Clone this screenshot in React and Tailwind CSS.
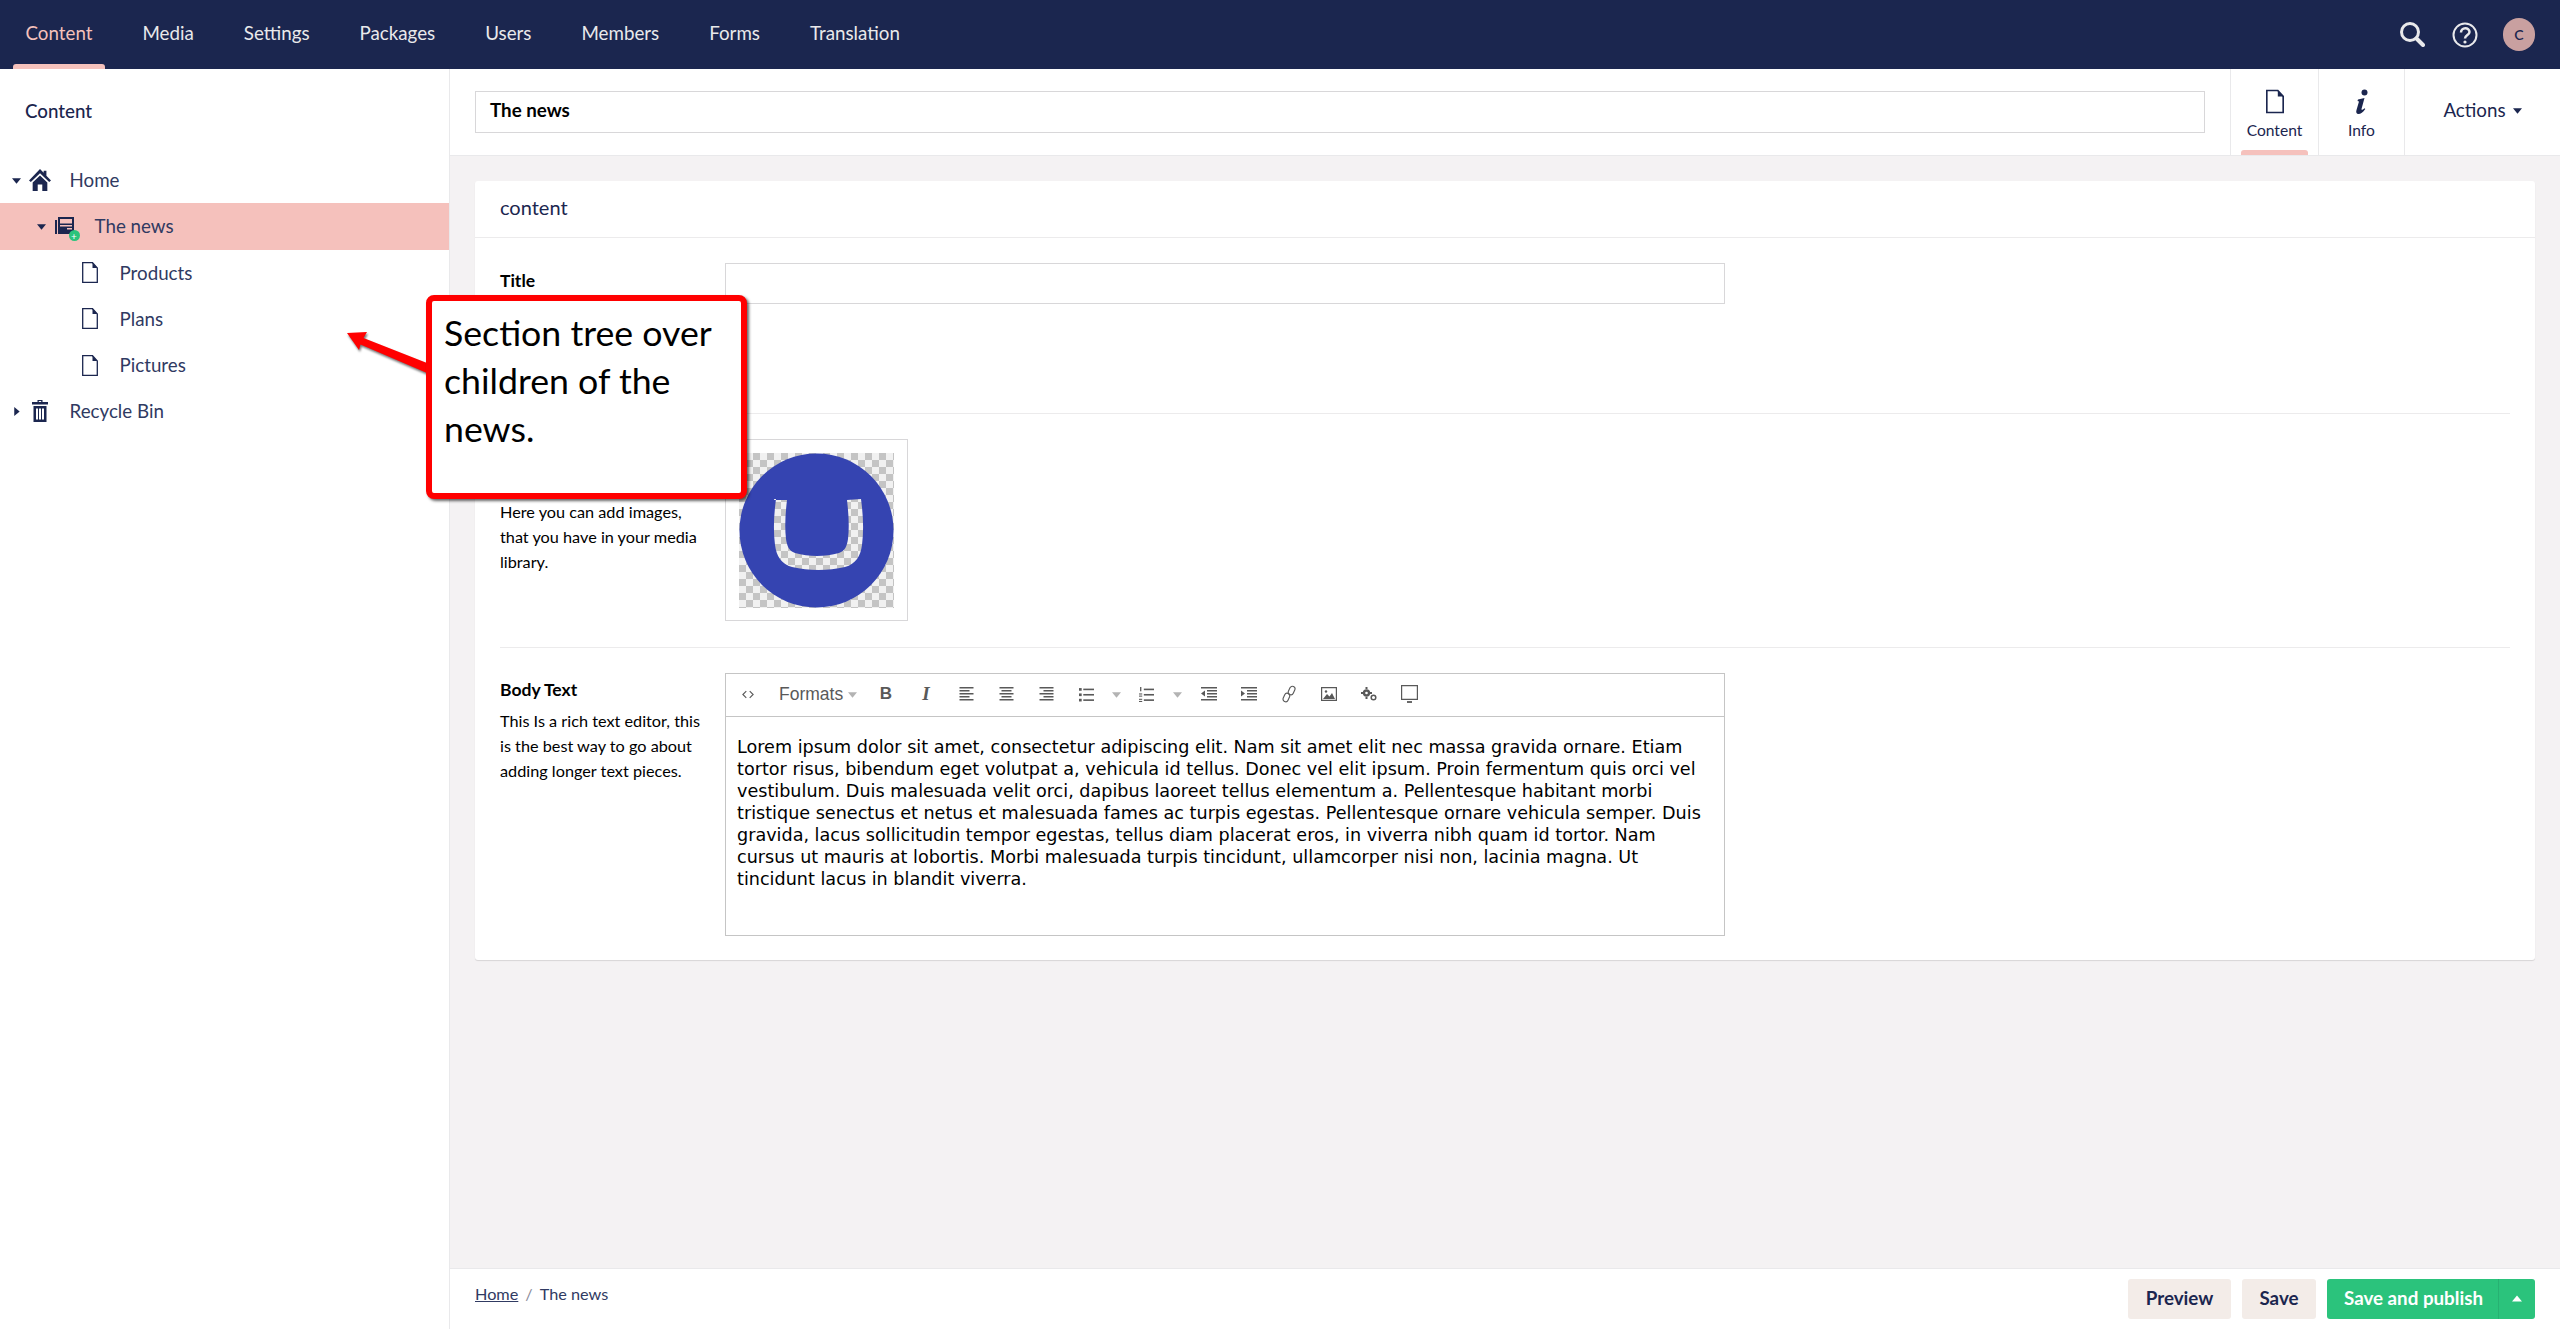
import React from "react";

const Doc = ({ className = "", sw = "1.300" }) => (
  <svg viewBox="0 0 16 21" className={className}>
    <path d="M.7.7h9.800L15.300 6v14.300H.7z" fill="#fff" stroke="#1b264f" strokeWidth={sw} />
    <path d="M10.500.7V6h4.800z" fill="#1b264f" />
  </svg>
);
const Caret = ({ dir = "down", className = "" }) => (
  <svg viewBox="0 0 10 10" className={className} fill="currentColor">
    {dir === "down" && <path d="M0 2.500h10L5 8.500z" />}
    {dir === "up" && <path d="M0 7.500h10L5 1.500z" />}
    {dir === "right" && <path d="M2.500 0v10L8.500 5z" />}
  </svg>
);

const NavItem = ({ children, active }) => (
  <div className={`relative h-full flex items-center px-[12.5px] pb-[3px] mr-[25px] text-[18.75px] ${active ? "text-[#f5c1bc]" : "text-[#e9e9eb]"}`}>
    {children}
    {active && <span className="absolute left-0 right-0 bottom-0 h-[5px] rounded-t-[3px] bg-[#f5c1bc]" />}
  </div>
);

const TreeRow = ({ depth, arrow, icon, label, active }) => (
  <div className={`flex items-center h-[46.25px] text-[18.75px] text-[#303a62] ${active ? "bg-[#f5c1bc]" : ""}`} style={{ paddingLeft: depth * 25 + 12 }}>
    <span className="w-[16px] flex items-center shrink-0 text-[#1b264f]">
      {arrow && <Caret dir={arrow} className="w-[9px] h-[9px]" />}
    </span>
    <span className="w-[24px] flex justify-center shrink-0 mr-[17.5px]">{icon}</span>
    <span>{label}</span>
  </div>
);

const Home = () => (
  <svg viewBox="0 0 24 24" className="w-[22px] h-[22px]" fill="#1b264f">
    <path d="M12 0 0 12.500l2 1.800L12 4.500l10 9.800 2-1.800L19 7.300V2h-3v2.200z" />
    <path d="M12 7 4 14.600V24h5.500v-7h5v7H20v-9.400z" />
  </svg>
);
const News = () => (
  <span className="relative block w-[19px] h-[18px] -ml-[2px]">
    <svg viewBox="0 0 19 18" className="w-[19px] h-[18px]">
      <path d="M0 3h2v14H0zM3 0h16v17H3z" fill="#1b264f" />
      <path d="M5 2h12v4.500H5zM5 8h12v1.500H5zM12 11h5v1.500h-5z" fill="#f5c1bc" />
    </svg>
    <span className="absolute right-[-6px] bottom-[-6px] w-[11px] h-[11px] rounded-full bg-[#2bc37c] flex items-center justify-center text-white text-[10px] leading-none">+</span>
  </span>
);
const Trash = () => (
  <svg viewBox="0 0 16 22" className="w-[16px] h-[22px]" fill="#1b264f">
    <path d="M5.500 0h5v2H16v2.500H0V2h5.500zM6.800 1v1h2.400V1z" fillRule="evenodd" />
    <path d="M1.500 6h13v16h-13zM4 8.500v11h2V8.500zm3 0v11h2V8.500zm3 0v11h2V8.500z" fillRule="evenodd" />
  </svg>
);

const Tool = ({ children, w = "w-[40px]" }) => (
  <span className={`${w} h-full pb-[2px] flex items-center justify-center shrink-0 text-[#595959]`}>{children}</span>
);
const Lines = ({ kind }) => {
  const rows = {
    left: [[0, 14], [0, 10], [0, 14], [0, 10], [0, 14]],
    center: [[0, 14], [2, 10], [0, 14], [2, 10], [0, 14]],
    right: [[0, 14], [4, 10], [0, 14], [4, 10], [0, 14]],
  }[kind];
  return (
    <svg viewBox="0 0 14 14" className="w-[15px] h-[14px]" fill="currentColor">
      {rows.map(([x, w], i) => <rect key={i} x={x} y={i * 3} width={w} height="1.500" />)}
    </svg>
  );
};
const ToolCaret = ({ w = "w-[21px]" }) => (
  <Tool w={w}><Caret className="w-[9px] h-[9px] text-[#b3b3b3]" /></Tool>
);

const Toolbar = () => (
  <div className="h-[43px] flex items-center border-b border-[#c5c5c5] shrink-0 pl-[2px]">
    <Tool>
      <svg viewBox="0 0 14 10" className="w-[12px] h-[9px]" fill="none" stroke="currentColor" strokeWidth="1.300"><path d="M5 1 1 5l4 4M9 1l4 4-4 4" /></svg>
    </Tool>
    <span className="flex items-center w-[98px] pl-[11px] pb-[2px] text-[17.5px] text-[#595959] font-['Liberation_Sans',sans-serif] shrink-0">
      Formats<Caret className="w-[9px] h-[9px] ml-[5px] text-[#b3b3b3]" />
    </span>
    <Tool><span className="font-['Liberation_Sans',sans-serif] font-bold text-[17px]">B</span></Tool>
    <Tool><span className="font-['Liberation_Serif',serif] italic font-bold text-[19px]">I</span></Tool>
    <Tool><Lines kind="left" /></Tool>
    <Tool><Lines kind="center" /></Tool>
    <Tool><Lines kind="right" /></Tool>
    <Tool>
      <svg viewBox="0 0 14 14" className="w-[15px] h-[15px]" fill="currentColor">
        <rect x="0" y="1" width="2.500" height="2.500" /><rect x="0" y="6" width="2.500" height="2.500" /><rect x="0" y="11" width="2.500" height="2.500" />
        <rect x="4" y="1.500" width="10" height="1.500" /><rect x="4" y="6.500" width="10" height="1.500" /><rect x="4" y="11.500" width="10" height="1.500" />
      </svg>
    </Tool>
    <ToolCaret w="w-[20px]" />
    <Tool>
      <svg viewBox="0 0 14 14" className="w-[15px] h-[15px]" fill="currentColor">
        <rect x="1" y="0" width="1.200" height="4" /><rect x="0" y="6" width="3" height="1" /><rect x="0" y="8" width="3" height="1" /><rect x="0" y="11" width="3" height="1" /><rect x="0" y="13" width="3" height="1" />
        <rect x="4.500" y="1.500" width="9.500" height="1.500" /><rect x="4.500" y="6.500" width="9.500" height="1.500" /><rect x="4.500" y="11.500" width="9.500" height="1.500" />
      </svg>
    </Tool>
    <ToolCaret w="w-[23px]" />
    <Tool>
      <svg viewBox="0 0 16 14" className="w-[16px] h-[14px]" fill="currentColor">
        <rect width="16" height="1.500" /><rect x="6" y="3" width="10" height="1.500" /><rect x="6" y="6" width="10" height="1.500" /><rect x="6" y="9" width="10" height="1.500" /><rect y="12" width="16" height="1.500" />
        <path d="M4 3.500v6L0 6.500z" />
      </svg>
    </Tool>
    <Tool>
      <svg viewBox="0 0 16 14" className="w-[16px] h-[14px]" fill="currentColor">
        <rect width="16" height="1.500" /><rect x="6" y="3" width="10" height="1.500" /><rect x="6" y="6" width="10" height="1.500" /><rect x="6" y="9" width="10" height="1.500" /><rect y="12" width="16" height="1.500" />
        <path d="M0 3.500v6l4-3z" />
      </svg>
    </Tool>
    <Tool>
      <svg viewBox="0 0 16 20" className="w-[14px] h-[18px]" fill="none" stroke="currentColor" strokeWidth="1.300">
        <rect x="8" y="1" width="6" height="10" rx="3" transform="rotate(25 11 6)" />
        <rect x="2" y="9" width="6" height="10" rx="3" transform="rotate(25 5 14)" />
      </svg>
    </Tool>
    <Tool>
      <svg viewBox="0 0 16 14" className="w-[16px] h-[14px]">
        <path d="M.6.600h14.800v12.800H.6z" fill="none" stroke="currentColor" strokeWidth="1.200" />
        <path d="M2 12l4-5 2.500 2.500L11 6l3 6z" fill="currentColor" />
        <circle cx="5" cy="4.500" r="1.200" fill="currentColor" />
      </svg>
    </Tool>
    <Tool>
      <svg viewBox="0 0 16 14" className="w-[16px] h-[14px]" fill="currentColor">
        <circle cx="5.500" cy="6" r="3.700" /><circle cx="5.500" cy="6" r="1.300" fill="#fff" />
        <path d="M4.500 0h2v2h-2zM4.500 10h2v2h-2zM0 5h2v2H0zM9 5h2v2H9z" />
        <circle cx="12.500" cy="10.500" r="2.300" fill="none" stroke="currentColor" strokeWidth="1.500" />
      </svg>
    </Tool>
    <Tool>
      <svg viewBox="0 0 17 18" className="w-[17px] h-[18px]" fill="none" stroke="currentColor" strokeWidth="1.200">
        <path d="M.6.600h15.800v13.800H.6z" /><path d="M6 17h5" strokeWidth="1.800" />
      </svg>
    </Tool>
  </div>
);

const Picture = () => (
  <svg viewBox="0 0 155 155" className="w-[155px] h-[155px] block">
    <defs>
      <pattern id="chk" width="14" height="14" patternUnits="userSpaceOnUse">
        <rect width="14" height="14" fill="#f1f1f1" />
        <rect width="7" height="7" fill="#c4c4c4" />
        <rect x="7" y="7" width="7" height="7" fill="#c4c4c4" />
      </pattern>
    </defs>
    <rect width="155" height="155" fill="url(#chk)" />
    <circle cx="77.500" cy="77.500" r="77" fill="#3544b1" />
    <path fill="url(#chk)" d="M34 46l14 1c-1.500 13-2.500 26-1 39 1 7 3 12 9 14 14 4 30 4 44 0 6-2 8-7 9-14 1.500-13 .5-26-1-39l14-1c2 15 3 30 1 46-1.500 11-6 19-17 22-17 4-36 4-53 0-11-3-15.500-11-17-22-2-16-1-31 1-46z" />
  </svg>
);

export default function App() {
  return (
    <div className="relative h-screen w-full flex flex-col overflow-hidden bg-white font-['Lato',sans-serif] text-[#1b264f]">
      <header className="h-[69px] shrink-0 bg-[#1b264f] flex items-center pl-[13px] pr-[25px]">
        <nav className="flex h-full">
          {["Content", "Media", "Settings", "Packages", "Users", "Members", "Forms", "Translation"].map((n, i) => (
            <NavItem key={n} active={i === 0}>{n}</NavItem>
          ))}
        </nav>
        <div className="ml-auto flex items-center">
          <svg viewBox="0 0 26 26" className="w-[26px] h-[26px] mr-[27px] -mt-[1px]" fill="none" stroke="#e9e9eb" strokeWidth="3">
            <circle cx="11" cy="11" r="8.500" /><path d="M17.500 17.500 24 24" strokeWidth="4" strokeLinecap="round" />
          </svg>
          <svg viewBox="0 0 26 26" className="w-[26px] h-[26px] mr-[25px]" fill="none" stroke="#e9e9eb" strokeWidth="2">
            <circle cx="13" cy="13" r="11.500" />
            <path d="M9 10.500c0-5.500 8.500-5.500 8.500-.5 0 3-4.500 3-4.500 6.500" strokeWidth="2.500" />
            <circle cx="13" cy="20" r="1.600" fill="#e9e9eb" stroke="none" />
          </svg>
          <div className="w-[32px] h-[33px] rounded-full bg-[#c9a0a0] text-[#1b264f] text-[14px] font-semibold flex items-center justify-center">C</div>
        </div>
      </header>

      <div className="flex flex-1 min-h-0">
        <aside className="w-[450px] shrink-0 border-r border-[#e9e9eb] flex flex-col">
          <div className="h-[88px] pb-[3px] flex items-center pl-[25px] text-[18.75px] font-medium">Content</div>
          <TreeRow depth={0} arrow="down" label="Home" icon={<Home />} />
          <TreeRow depth={1} arrow="down" label="The news" active icon={<News />} />
          <TreeRow depth={2} label="Products" icon={<Doc className="w-[16px] h-[21px]" />} />
          <TreeRow depth={2} label="Plans" icon={<Doc className="w-[16px] h-[21px]" />} />
          <TreeRow depth={2} label="Pictures" icon={<Doc className="w-[16px] h-[21px]" />} />
          <TreeRow depth={0} arrow="right" label="Recycle Bin" icon={<Trash />} />
        </aside>

        <main className="flex-1 min-w-0 flex flex-col bg-[#f4f2f3]">
          <div className="h-[87px] shrink-0 bg-white border-b border-[#e9e9eb] flex pl-[25px]">
            <div className="flex-1 flex items-center pr-[25px]">
              <div className="h-[42px] w-full border border-[#d8d7d9] flex items-center pl-[14px] pb-[3px] text-[18.75px] font-bold text-[#000]">The news</div>
            </div>
            <div className="relative w-[88px] border-l border-[#e9e9eb] flex flex-col items-center pt-[20px] text-[15.6px]">
              <Doc sw="1.500" className="w-[18px] h-[25px] mb-[5px]" />
              <span>Content</span>
              <span className="absolute left-[10px] right-[10px] bottom-0 h-[5px] rounded-t-[3px] bg-[#f5c1bc]" />
            </div>
            <div className="w-[87px] border-x border-[#e9e9eb] flex flex-col items-center pt-[20px] text-[15.6px]">
              <svg viewBox="0 0 14 25" className="w-[14px] h-[25px] mb-[5px]" fill="#1b264f">
                <circle cx="9.500" cy="3.500" r="3" />
                <path d="M3 10.500 9.500 9l-3 11c-.3 1.200.8 1.200 3-.8l.8.8C8 23.500 5.700 25 3.500 25 1.300 25 .8 23.300 1.500 21L4 12.500l-1.500-.4z" />
              </svg>
              <span>Info</span>
            </div>
            <div className="w-[155px] flex items-center justify-center pb-[3px] text-[18.75px]">
              Actions<Caret className="w-[9px] h-[9px] ml-[7px]" />
            </div>
          </div>

          <div className="flex-1 min-h-0 px-[25px] pt-[25px]">
            <section className="bg-white rounded-[3px] h-[779px] shadow-[0_1px_1px_rgba(0,0,0,0.12)]">
              <div className="h-[57px] pb-[4px] flex items-center pl-[25px] border-b border-[#ecebec] text-[20px]">content</div>
              <div className="mx-[25px]">
                <div className="flex h-[176px] pt-[25px] border-b border-[#ecebec]">
                  <div className="w-[225px] shrink-0 pt-[5px] text-[17.5px] font-bold text-[#000]">Title</div>
                  <div className="w-[1000px] h-[41px] border border-[#d8d7d9]" />
                </div>
                <div className="h-[1px]" />
                <div className="flex h-[233px] pt-[24px] border-b border-[#ecebec]">
                  <div className="w-[225px] shrink-0 pt-[60px] text-[16.25px] leading-[25px] text-[#000] pr-[20px]">
                    Here you can add images, that you have in your media library.
                  </div>
                  <div className="w-[183px] h-[182px] border border-[#d8d7d9] flex items-center justify-center">
                    <Picture />
                  </div>
                </div>
                <div className="flex pt-[25px]">
                  <div className="w-[225px] shrink-0 pr-[20px] pt-[4px]">
                    <div className="text-[17.5px] font-bold text-[#000] mb-[5px]">Body Text</div>
                    <div className="text-[16.25px] leading-[25px] text-[#000]">
                      This Is a rich text editor, this is the best way to go about adding longer text pieces.
                    </div>
                  </div>
                  <div className="w-[1000px] h-[263px] border border-[#c5c5c5] flex flex-col">
                    <Toolbar />
                    <div className="px-[11px] pt-[19px] font-['DejaVu_Sans',sans-serif] text-[17.6px] leading-[22px] text-[#000]">
                      Lorem ipsum dolor sit amet, consectetur adipiscing elit. Nam sit amet elit nec massa gravida ornare. Etiam tortor risus, bibendum eget volutpat a, vehicula id tellus. Donec vel elit ipsum. Proin fermentum quis orci vel vestibulum. Duis malesuada velit orci, dapibus laoreet tellus elementum a. Pellentesque habitant morbi tristique senectus et netus et malesuada fames ac turpis egestas. Pellentesque ornare vehicula semper. Duis gravida, lacus sollicitudin tempor egestas, tellus diam placerat eros, in viverra nibh quam id tortor. Nam cursus ut mauris at lobortis. Morbi malesuada turpis tincidunt, ullamcorper nisi non, lacinia magna. Ut tincidunt lacus in blandit viverra.
                    </div>
                  </div>
                </div>
              </div>
            </section>
          </div>

          <footer className="h-[61px] shrink-0 bg-white border-t border-[#e9e9eb] flex items-center pl-[25px] pr-[25px]">
            <div className="text-[16.25px] -mt-[10px] flex items-center text-[#303a62]">
              <span className="underline">Home</span>
              <span className="mx-[7px] text-[#8a8a9a]">/</span>
              <span>The news</span>
            </div>
            <div className="ml-auto flex items-center text-[18.75px] font-bold">
              <span className="h-[40px] w-[103px] pb-[2px] rounded-[3px] bg-[#f3ece8] flex items-center justify-center">Preview</span>
              <span className="h-[40px] w-[74px] pb-[2px] ml-[11px] rounded-[3px] bg-[#f3ece8] flex items-center justify-center">Save</span>
              <span className="h-[40px] w-[208px] ml-[11px] rounded-[3px] bg-[#2bc37c] text-white flex items-center">
                <span className="w-[172px] h-full pb-[2px] pl-[2px] flex items-center justify-center border-r border-[#27b172]">Save and publish</span>
                <span className="flex-1 flex items-center justify-center"><Caret dir="up" className="w-[10px] h-[10px]" /></span>
              </span>
            </div>
          </footer>
        </main>
      </div>

      <svg viewBox="0 0 90 60" className="absolute left-[340px] top-[320px] w-[90px] h-[60px] drop-shadow-[1px_2px_1px_rgba(0,0,0,0.55)]" fill="#ff0000">
        <path d="M7 13 27 12 23.500 18 87 43 87 53 20.500 24.500 19 30z" />
      </svg>
      <div className="absolute left-[426px] top-[295px] w-[321px] h-[204px] bg-white border-[6px] border-[#ff0000] rounded-[8px] shadow-[2px_2px_3px_rgba(0,0,0,0.6)] pl-[12px] pt-[8px] text-[35.7px] leading-[48px] text-black">
        Section tree over children of the news.
      </div>
    </div>
  );
}
